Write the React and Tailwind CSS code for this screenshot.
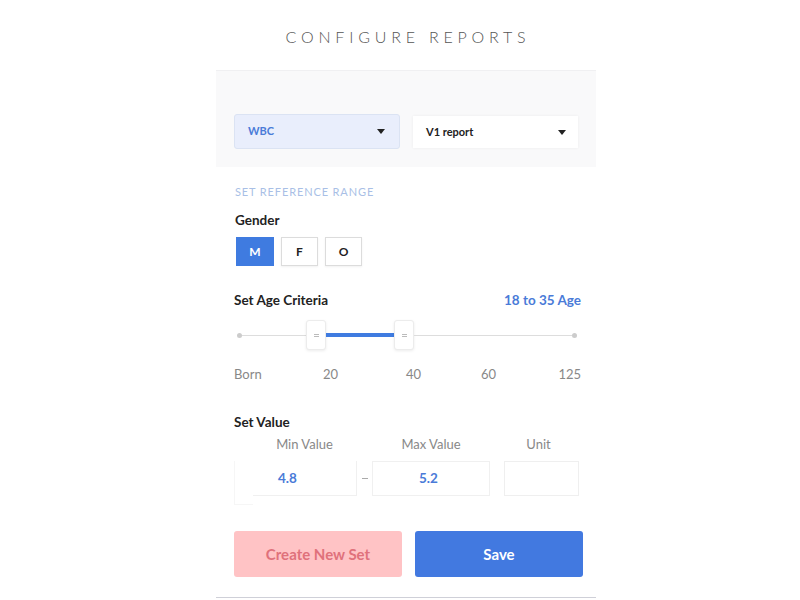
import React from "react";

function Caret() {
  return (
    <svg width="8" height="5" viewBox="0 0 8 5" className="shrink-0">
      <path d="M0 0h8L4 5z" fill="#222" />
    </svg>
  );
}

function Handle() {
  return (
    <div className="w-[20px] h-[30px] bg-white border border-[#ececec] rounded-[3px] shadow-[0_1px_3px_rgba(0,0,0,0.08)] flex items-center justify-center shrink-0">
      <div className="flex flex-col gap-[1px]">
        <div className="w-[5px] h-px bg-[#bbb]" />
        <div className="w-[5px] h-px bg-[#bbb]" />
      </div>
    </div>
  );
}

export default function App() {
  return (
    <div className="w-[800px] h-[600px] bg-white flex flex-col items-center font-['Lato',sans-serif] overflow-hidden">
      <h1 className="mt-[27px] ml-[12px] h-[20px] text-[16px] leading-[20px] font-light tracking-[0.3em] text-[#555] pl-[4px]">
        CONFIGURE REPORTS
      </h1>

      <div className="mt-[23px] ml-[12px] w-[380px] flex flex-col">
        {/* report pickers */}
        <div className="h-[97px] bg-[#f9f9fa] border-t border-[#f0f0f2] flex items-start gap-[13px] px-[18px] pt-[43px]">
          <div className="w-[166px] h-[35px] bg-[#e9eefc] border border-[#dbe3f3] rounded-[3px] flex items-center justify-between pl-[13px] pr-[14px]">
            <span className="text-[11px] font-bold text-[#4a7bd8]">WBC</span>
            <Caret />
          </div>
          <div className="mt-[2px] w-[165px] h-[32px] bg-white shadow-[0_0_3px_rgba(0,0,0,0.06)] flex items-center justify-between pl-[13px] pr-[12px]">
            <span className="text-[11px] font-bold text-[#222]">V1 report</span>
            <Caret />
          </div>
        </div>

        <div className="px-[18px] flex flex-col">
          <div className="mt-[18px] text-[11px] leading-[14px] tracking-[0.08em] text-[#a9bfe6] pl-px">
            SET REFERENCE RANGE
          </div>

          <div className="mt-[13px] text-[13.5px] leading-[16px] font-bold text-[#222] pl-px">Gender</div>
          <div className="mt-[9px] flex gap-[7px] pl-[2px]">
            <div className="w-[38px] h-[29px] bg-[#3f7be0] text-white text-[12px] font-bold flex items-center justify-center">
              M
            </div>
            <div className="w-[37px] h-[29px] border border-[#dcdcdc] shadow-[0_1px_2px_rgba(0,0,0,0.06)] text-[#222] text-[12px] font-bold flex items-center justify-center">
              F
            </div>
            <div className="w-[37px] h-[29px] border border-[#dcdcdc] shadow-[0_1px_2px_rgba(0,0,0,0.06)] text-[#222] text-[12px] font-bold flex items-center justify-center">
              O
            </div>
          </div>

          <div className="mt-[26px] flex justify-between items-center -mr-[3px]">
            <span className="text-[13.5px] leading-[16px] font-bold text-[#222]">Set Age Criteria</span>
            <span className="text-[13.5px] leading-[16px] font-bold text-[#4a7bd8]">18 to 35 Age</span>
          </div>

          {/* age range slider */}
          <div className="mt-[12px] h-[30px] flex items-center pl-[3px] pr-[1px]">
            <div className="w-[5px] h-[5px] rounded-full bg-[#ccc] shrink-0" />
            <div className="w-[64px] h-px bg-[#ddd]" />
            <Handle />
            <div className="w-[68px] h-[4px] bg-[#3f7be0]" />
            <Handle />
            <div className="flex-1 h-px bg-[#ddd]" />
            <div className="w-[5px] h-[5px] rounded-full bg-[#ccc] shrink-0" />
          </div>

          <div className="mt-[16px] flex text-[13px] leading-[16px] text-[#888] -mr-[3px]">
            <span className="w-[89px]">Born</span>
            <span className="w-[83px]">20</span>
            <span className="w-[75px]">40</span>
            <span className="flex-1">60</span>
            <span>125</span>
          </div>

          <div className="mt-[32px] text-[13.5px] leading-[16px] font-bold text-[#222]">Set Value</div>
          <div className="mt-[6px] flex text-[13px] leading-[16px] text-[#888]">
            <span className="w-[141px] text-center">Min Value</span>
            <span className="w-[112px] text-center">Max Value</span>
            <span className="flex-1 text-center pl-[12px]">Unit</span>
          </div>

          <div className="mt-[1px] flex items-stretch h-[52px] -mr-[4px]">
            <div className="w-[19px] shrink-0 border-l border-b border-[#f6f6f6] mt-[8px]" />
            <div className="w-[104px] shrink-0 h-[35px] mt-[8px] border-r border-b border-[#f0f0f0] flex items-center pl-[25px]">
              <span className="text-[13.5px] font-bold text-[#4a7bd8]">4.8</span>
            </div>
            <div className="w-[15px] shrink-0 flex items-center justify-center h-[35px] mt-[8px]">
              <div className="w-[6px] h-px bg-[#aaa]" />
            </div>
            <div className="w-[118px] shrink-0 h-[35px] mt-[8px] border border-[#f0f0f0] flex items-center pl-[46px]">
              <span className="text-[13.5px] font-bold text-[#4a7bd8]">5.2</span>
            </div>
            <div className="w-[14px] shrink-0" />
            <div className="w-[75px] shrink-0 h-[35px] mt-[8px] border border-[#efefef]" />
          </div>

          <div className="mt-[26px] flex gap-[13px] -mr-[6px]">
            <button className="w-[168px] shrink-0 h-[46px] bg-[#ffc3c5] rounded-[3px] text-[15px] font-bold text-[#e0717b]">
              Create New Set
            </button>
            <button className="w-[168px] shrink-0 h-[46px] bg-[#4279e0] rounded-[3px] text-[15px] font-bold text-white">
              Save
            </button>
          </div>
        </div>

        <div className="mt-[20px] h-px bg-[#cfd0d8]" />
      </div>
    </div>
  );
}
